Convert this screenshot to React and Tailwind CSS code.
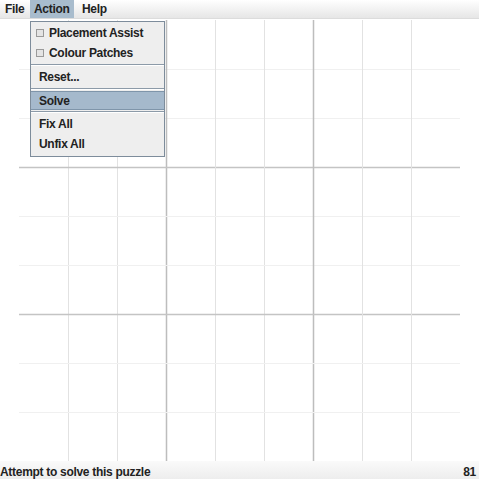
import React from "react";

const font = { fontFamily: '"Liberation Sans", Arial, sans-serif' };

function Board() {
  const lines = [];
  for (let k = 1; k <= 8; k++) {
    const p = 49 * k;
    const thick = k % 3 === 0;
    lines.push(
      <line key={"v" + k} x1={p + 0.5} y1={0} x2={p + 0.5} y2={441}
        stroke={thick ? "#bdbdbd" : "#e2e2e2"} strokeWidth={thick ? 1.5 : 1} />
    );
    lines.push(
      <line key={"h" + k} x1={0} y1={p + 0.5} x2={441} y2={p + 0.5}
        stroke={thick ? "#c4c4c4" : "#f0f0f0"} strokeWidth={thick ? 1.5 : 1} />
    );
  }
  return (
    <svg width="441" height="441" viewBox="0 0 441 441" className="block">
      {lines}
    </svg>
  );
}

function Check() {
  return (
    <span className="inline-block w-[8px] h-[8px] border border-[#9a9a9a] bg-[#e4e4e4] mr-[5px]" />
  );
}

function Sep() {
  return <div className="h-[4px] flex flex-col justify-center"><div className="h-[1px] bg-[#8c9aa8]" /><div className="h-[1px] bg-white" /></div>;
}

function Item({ children, active, check }) {
  return (
    <div
      className={
        "flex items-center text-[12px] tracking-[-0.3px] font-bold text-[#222] " +
        (check ? "pl-[5px] " : "pl-[8px] ") +
        (active ? "h-[19px] bg-[#a5b9cc] border-y border-[#7f95aa]" : "h-[20px]")
      }
    >
      {children}
    </div>
  );
}

export default function App() {
  return (
    <div className="relative w-[479px] h-[479px] bg-white overflow-hidden flex flex-col" style={font}>
      <div className="h-[22px] flex items-stretch bg-gradient-to-b from-white to-[#e6e6e6] border-b border-[#dcdcdc] text-[12px] tracking-[-0.3px] font-bold text-[#222]">
        <div className="pl-[5px] pr-[5px] w-[30px] flex items-center">File</div>
        <div className="pl-[4px] flex items-center bg-[#a8bccd] w-[44px]">Action</div>
        <div className="pl-[8px] flex items-center">Help</div>
      </div>
      <div className="h-[442px] pl-[19px] pt-[1px]">
        <Board />
      </div>
      <div className="flex-1 flex items-center justify-between bg-gradient-to-b from-[#fafafa] to-[#ececec] text-[12px] tracking-[-0.3px] font-bold text-[#222] pr-[3px] pt-[2px]">
        <span>Attempt to solve this puzzle</span>
        <span>81</span>
      </div>

      <div className="absolute left-[30px] top-[21px] w-[135px] h-[136px] bg-[#eeeeee] border border-[#7d8c9b] py-[1px]">
        <Item check><Check />Placement Assist</Item>
        <Item check><Check />Colour Patches</Item>
        <Sep />
        <Item>Reset...</Item>
        <Sep />
        <Item active>Solve</Item>
        <Sep />
        <Item>Fix All</Item>
        <Item>Unfix All</Item>
      </div>
    </div>
  );
}
